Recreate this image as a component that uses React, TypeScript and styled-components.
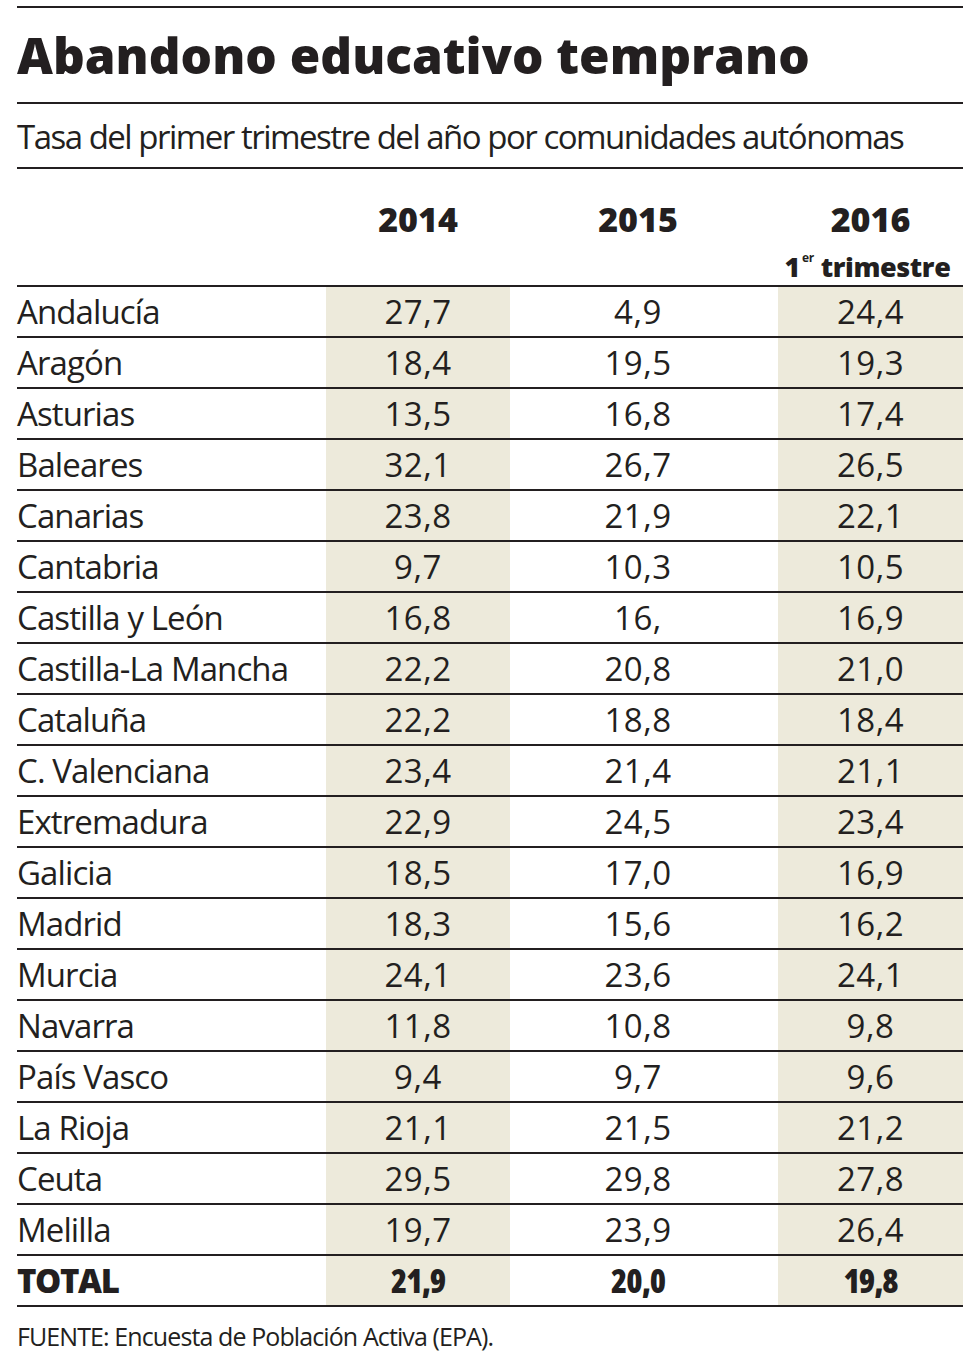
import { createGlobalStyle } from 'styled-components';
import styled from 'styled-components';

const rows: [string, string, string, string][] = [
  ['Andalucía', '27,7', '4,9', '24,4'],
  ['Aragón', '18,4', '19,5', '19,3'],
  ['Asturias', '13,5', '16,8', '17,4'],
  ['Baleares', '32,1', '26,7', '26,5'],
  ['Canarias', '23,8', '21,9', '22,1'],
  ['Cantabria', '9,7', '10,3', '10,5'],
  ['Castilla y León', '16,8', '16,', '16,9'],
  ['Castilla-La Mancha', '22,2', '20,8', '21,0'],
  ['Cataluña', '22,2', '18,8', '18,4'],
  ['C. Valenciana', '23,4', '21,4', '21,1'],
  ['Extremadura', '22,9', '24,5', '23,4'],
  ['Galicia', '18,5', '17,0', '16,9'],
  ['Madrid', '18,3', '15,6', '16,2'],
  ['Murcia', '24,1', '23,6', '24,1'],
  ['Navarra', '11,8', '10,8', '9,8'],
  ['País Vasco', '9,4', '9,7', '9,6'],
  ['La Rioja', '21,1', '21,5', '21,2'],
  ['Ceuta', '29,5', '29,8', '27,8'],
  ['Melilla', '19,7', '23,9', '26,4'],
];

const GlobalStyle = createGlobalStyle`
  body {
    margin: 0;
    background: #fff;
    color: #231f20;
    font-family: "Open Sans", "Liberation Sans", sans-serif;
  }
`;

const Page = styled.div`
  width: 946px;
  padding: 6px 0 0 17px;
`;

const Title = styled.h1`
  margin: 0;
  height: 94px;
  border-top: 2px solid #231f20;
  border-bottom: 2px solid #231f20;
  box-sizing: content-box;
  font-size: 49.5px;
  font-weight: 800;
  letter-spacing: 0;
  line-height: 94px;
`;

const Subtitle = styled.p`
  margin: 0;
  height: 63px;
  border-bottom: 2px solid #231f20;
  font-size: 33px;
  font-weight: 400;
  line-height: 66px;
  letter-spacing: -1.5px;
  font-stretch: 88%;
`;

const Grid = styled.div`
  display: grid;
  grid-template-columns: 309px 184px 268px 185px;
  align-items: stretch;
  border-bottom: 2px solid #231f20;
`;

const HeadRow = styled(Grid)`
  height: 116px;
`;

const Row = styled(Grid)`
  height: 49px;
`;

const Cell = styled.div<{ $shaded?: boolean; $bold?: boolean; $shift?: boolean }>`
  display: flex;
  align-items: center;
  justify-content: center;
  padding-right: ${(p) => (p.$shift ? '12px' : '0')};
  background: ${(p) => (p.$shaded ? '#edeadb' : 'transparent')};
  font-size: 33px;
  font-weight: ${(p) => (p.$bold ? 800 : 400)};
  letter-spacing: ${(p) => (p.$bold ? '-1px' : '0.5px')};
  font-stretch: ${(p) => (p.$bold ? '85%' : '90%')};
`;

const Name = styled(Cell)`
  justify-content: flex-start;
  letter-spacing: ${(p) => (p.$bold ? '-1.4px' : '-0.9px')};
  font-stretch: ${(p) => (p.$bold ? '96%' : '90%')};
`;

const Year = styled.div<{ $shift?: boolean }>`
  display: flex;
  flex-direction: column;
  align-items: center;
  justify-content: flex-start;
  padding-top: 30px;
  padding-right: ${(p) => (p.$shift ? '12px' : '0')};
  font-size: 34px;
  font-weight: 800;
  line-height: 40px;
`;

const Quarter = styled.span`
  font-size: 27px;
  line-height: 30px;
  margin-top: 4px;
  margin-right: 6px;
  letter-spacing: -0.4px;

  sup {
    font-size: 12px;
    font-weight: 700;
    vertical-align: 15px;
    margin: 0 7px 0 2px;
  }
`;

const Source = styled.p`
  margin: 12px 0 0;
  font-size: 25px;
  letter-spacing: -0.9px;
  font-stretch: 90%;
`;

export default function App() {
  return (
    <>
      <GlobalStyle />
      <Page>
        <Title>Abandono educativo temprano</Title>
        <Subtitle>Tasa del primer trimestre del año por comunidades autónomas</Subtitle>
        <HeadRow>
          <div />
          <Year>2014</Year>
          <Year $shift>2015</Year>
          <Year>
            2016
            <Quarter>
              1<sup>er</sup>trimestre
            </Quarter>
          </Year>
        </HeadRow>
        {rows.map(([name, a, b, c]) => (
          <Row key={name}>
            <Name>{name}</Name>
            <Cell $shaded>{a}</Cell>
            <Cell $shift>{b}</Cell>
            <Cell $shaded>{c}</Cell>
          </Row>
        ))}
        <Row>
          <Name $bold>TOTAL</Name>
          <Cell $shaded $bold>21,9</Cell>
          <Cell $shift $bold>20,0</Cell>
          <Cell $shaded $bold>19,8</Cell>
        </Row>
        <Source>FUENTE: Encuesta de Población Activa (EPA).</Source>
      </Page>
    </>
  );
}
